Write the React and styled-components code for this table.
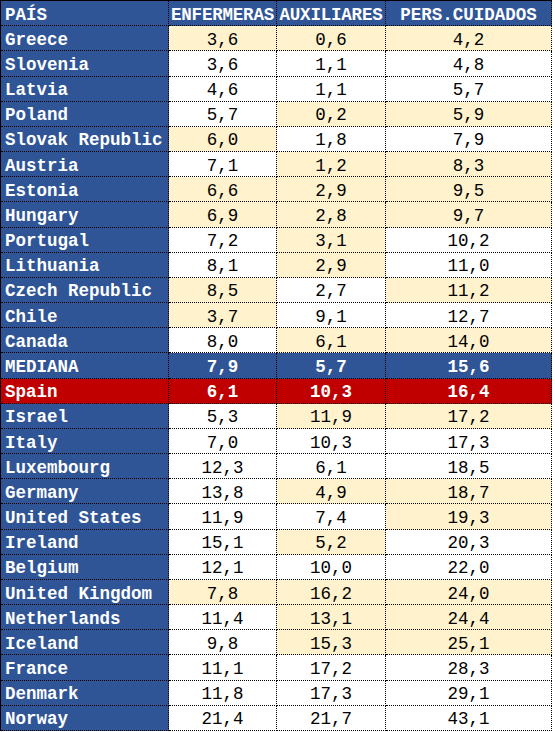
import React from 'react';
import styled, { createGlobalStyle } from 'styled-components';

const GlobalStyle = createGlobalStyle`
    body {
        margin: 0;
        background: #ffffff;
        font-family: "Courier New", "Nimbus Mono PS", "FreeMono", "Liberation Mono", monospace;
    }
`

const BLUE = '#2F5597'
const CREAM = '#FFF2CC'
const RED = '#C00000'

const Grid = styled('div')`
    display: grid;
    grid-template-columns: 168px 108px 109px 166px;
    grid-template-rows: repeat(29, 1fr);
    width: 551px;
    height: 730px;
    border-top: 1px solid #000;
    border-left: 1px solid #000;
    font-size: 17.5px;
`

const Cell = styled('div')`
    display: flex;
    align-items: center;
    justify-content: ${p => (p.$name ? 'flex-start' : 'center')};
    padding: 3px 0 0 ${p => (p.$name ? '4px' : '0')};
    border-right: 1px dotted #000;
    border-bottom: 1px dotted #000;
    background: ${p => p.$bg};
    color: ${p => (p.$light ? '#ffffff' : '#000000')};
    font-weight: ${p => (p.$light ? 700 : 400)};
    white-space: nowrap;
    overflow: hidden;
    letter-spacing: ${p => (p.$tight ? '-0.2px' : '0')};
`

// last field: which value cells are cream (1) or white (0)
const rows = [
    ['Greece', '3,6', '0,6', '4,2', '111'],
    ['Slovenia', '3,6', '1,1', '4,8', '000'],
    ['Latvia', '4,6', '1,1', '5,7', '000'],
    ['Poland', '5,7', '0,2', '5,9', '011'],
    ['Slovak Republic', '6,0', '1,8', '7,9', '100'],
    ['Austria', '7,1', '1,2', '8,3', '011'],
    ['Estonia', '6,6', '2,9', '9,5', '111'],
    ['Hungary', '6,9', '2,8', '9,7', '111'],
    ['Portugal', '7,2', '3,1', '10,2', '010'],
    ['Lithuania', '8,1', '2,9', '11,0', '010'],
    ['Czech Republic', '8,5', '2,7', '11,2', '101'],
    ['Chile', '3,7', '9,1', '12,7', '100'],
    ['Canada', '8,0', '6,1', '14,0', '011'],
    ['MEDIANA', '7,9', '5,7', '15,6', 'blue'],
    ['Spain', '6,1', '10,3', '16,4', 'red'],
    ['Israel', '5,3', '11,9', '17,2', '011'],
    ['Italy', '7,0', '10,3', '17,3', '000'],
    ['Luxembourg', '12,3', '6,1', '18,5', '000'],
    ['Germany', '13,8', '4,9', '18,7', '011'],
    ['United States', '11,9', '7,4', '19,3', '001'],
    ['Ireland', '15,1', '5,2', '20,3', '010'],
    ['Belgium', '12,1', '10,0', '22,0', '000'],
    ['United Kingdom', '7,8', '16,2', '24,0', '111'],
    ['Netherlands', '11,4', '13,1', '24,4', '011'],
    ['Iceland', '9,8', '15,3', '25,1', '011'],
    ['France', '11,1', '17,2', '28,3', '000'],
    ['Denmark', '11,8', '17,3', '29,1', '000'],
    ['Norway', '21,4', '21,7', '43,1', '000'],
]

const headers = ['ENFERMERAS', 'AUXILIARES', 'PERS.CUIDADOS']

const App = () => {
    return (
        <>
            <GlobalStyle />
            <Grid>
                <Cell $name $light $bg={BLUE}>PAÍS</Cell>
                {headers.map((h, i) => (
                    <Cell key={h} $light $bg={BLUE} $tight={i < 2}>{h}</Cell>
                ))}
                {rows.map(([name, a, b, c, fill]) => {
                    const special = fill === 'blue' ? BLUE : fill === 'red' ? RED : null
                    return (
                        <React.Fragment key={name}>
                            <Cell $name $light $bg={special || BLUE}>{name}</Cell>
                            {[a, b, c].map((v, i) => (
                                <Cell
                                    key={i}
                                    $light={!!special}
                                    $bg={special || (fill[i] === '1' ? CREAM : '#ffffff')}
                                >
                                    {v}
                                </Cell>
                            ))}
                        </React.Fragment>
                    )
                })}
            </Grid>
        </>
    );
};

export default App;
